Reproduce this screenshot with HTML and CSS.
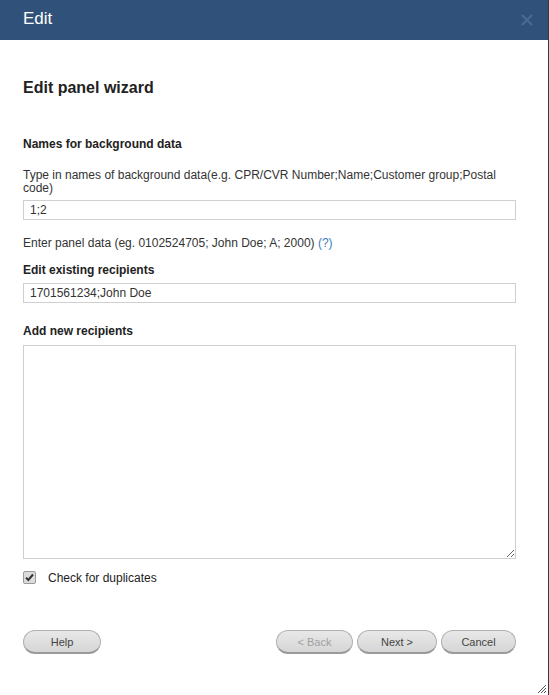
FILE: index.html
```html
<!DOCTYPE html>
<html>
<head>
<meta charset="utf-8">
<link rel="stylesheet" href="styles.css">
</head>
<body>
<div class="dialog">
  <div class="titlebar">
    <span class="title">Edit</span>
    <svg class="close" width="12" height="12" viewBox="0 0 12 12"><path d="M1.5 1.5 L10.5 10.5 M10.5 1.5 L1.5 10.5" stroke="#4b6890" stroke-width="2.4" stroke-linecap="round"/></svg>
  </div>
  <div class="content">
    <h2 class="wizard-title">Edit panel wizard</h2>
    <div class="label label-first">Names for background data</div>
    <div class="desc desc-first">Type in names of background data(e.g. CPR/CVR Number;Name;Customer group;Postal code)</div>
    <div class="field field-first">1;2</div>
    <div class="desc desc-panel">Enter panel data (eg. 0102524705; John Doe; A; 2000) <span class="help-link">(?)</span></div>
    <div class="label label-existing">Edit existing recipients</div>
    <div class="field field-existing">1701561234;John Doe</div>
    <div class="label label-new">Add new recipients</div>
    <textarea class="area"></textarea>
    <div class="check-row">
      <span class="checkbox"><svg width="11" height="11" viewBox="0 0 11 11"><path d="M2 5.6 L4.3 8 L9 2.5" fill="none" stroke="#333" stroke-width="2"/></svg></span>
      <span class="check-label">Check for duplicates</span>
    </div>
    <div class="buttons">
      <button class="btn btn-help">Help</button>
      <div class="btn-group">
        <button class="btn btn-back" disabled>&lt; Back</button>
        <button class="btn btn-next">Next &gt;</button>
        <button class="btn btn-cancel">Cancel</button>
      </div>
    </div>
  </div>
  <svg class="grip" width="10" height="10" viewBox="0 0 10 10"><path d="M9 1 L1 9 M9 4 L4 9 M9 7 L7 9" stroke="#555" stroke-width="1"/></svg>
</div>
</body>
</html>
```

FILE: styles.css
```css
html, body {
  margin: 0;
  padding: 0;
  background: #fff;
}
body {
  font-family: "Liberation Sans", Arial, sans-serif;
  color: #222;
}
.dialog {
  position: relative;
  width: 548px;
  height: 695px;
  border-right: 1px solid #3b3b3b;
  background: #fff;
  box-sizing: content-box;
}
.titlebar {
  height: 40px;
  background: #30527a;
  display: flex;
  align-items: center;
  justify-content: space-between;
  padding: 0 15px 0 23px;
}
.title {
  color: #fff;
  font-size: 17px;
  margin-top: -2px;
}
.close {
  display: block;
}
.content {
  padding: 0 32px 0 23px;
}
.wizard-title {
  margin: 39px 0 0;
  font-size: 16px;
  line-height: 18px;
  font-weight: bold;
  color: #222;
}
.label {
  font-size: 12px;
  line-height: 14px;
  font-weight: bold;
  color: #222;
}
.label-first { margin-top: 40px; }
.desc {
  font-size: 12px;
  line-height: 13px;
  color: #333;
}
.desc-first { margin-top: 18px; }
.field {
  height: 18px;
  border: 1px solid #cfcfcf;
  font-size: 12px;
  line-height: 18px;
  padding: 0 6px;
  color: #333;
}
.field-first { margin-top: 5px; }
.desc-panel { margin-top: 16px; line-height: 14px; }
.help-link { color: #3a7dc0; }
.label-existing { margin-top: 13px; }
.field-existing { margin-top: 6px; }
.label-new { margin-top: 21px; }
.area {
  display: block;
  width: 100%;
  height: 214px;
  box-sizing: border-box;
  margin: 7px 0 0;
  border: 1px solid #cfcfcf;
  resize: both;
  font-family: inherit;
}
.check-row {
  display: flex;
  align-items: center;
  margin-top: 12px;
  height: 13px;
}
.checkbox {
  width: 11px;
  height: 11px;
  border: 1px solid #9a9a9a;
  background: #dcdcdc;
  border-radius: 2px;
  display: flex;
  align-items: center;
  justify-content: center;
}
.check-label {
  font-size: 12px;
  color: #222;
  margin-left: 12px;
}
.buttons {
  display: flex;
  justify-content: space-between;
  margin-top: 46px;
}
.btn-group {
  display: flex;
  gap: 4px;
}
.btn {
  height: 24px;
  border: 1px solid #b0b0b0;
  border-bottom: 2px solid #9a9a9a;
  border-radius: 12px;
  background: linear-gradient(#e8e8e8, #d6d6d6);
  font-family: "Liberation Sans", Arial, sans-serif;
  font-size: 11px;
  color: #444;
  padding: 0;
}
.btn-help { width: 78px; }
.btn-back { width: 77px; color: #a0a0a0; }
.btn-next { width: 80px; }
.btn-cancel { width: 75px; }
.grip {
  position: absolute;
  right: 1px;
  bottom: 1px;
}
```
